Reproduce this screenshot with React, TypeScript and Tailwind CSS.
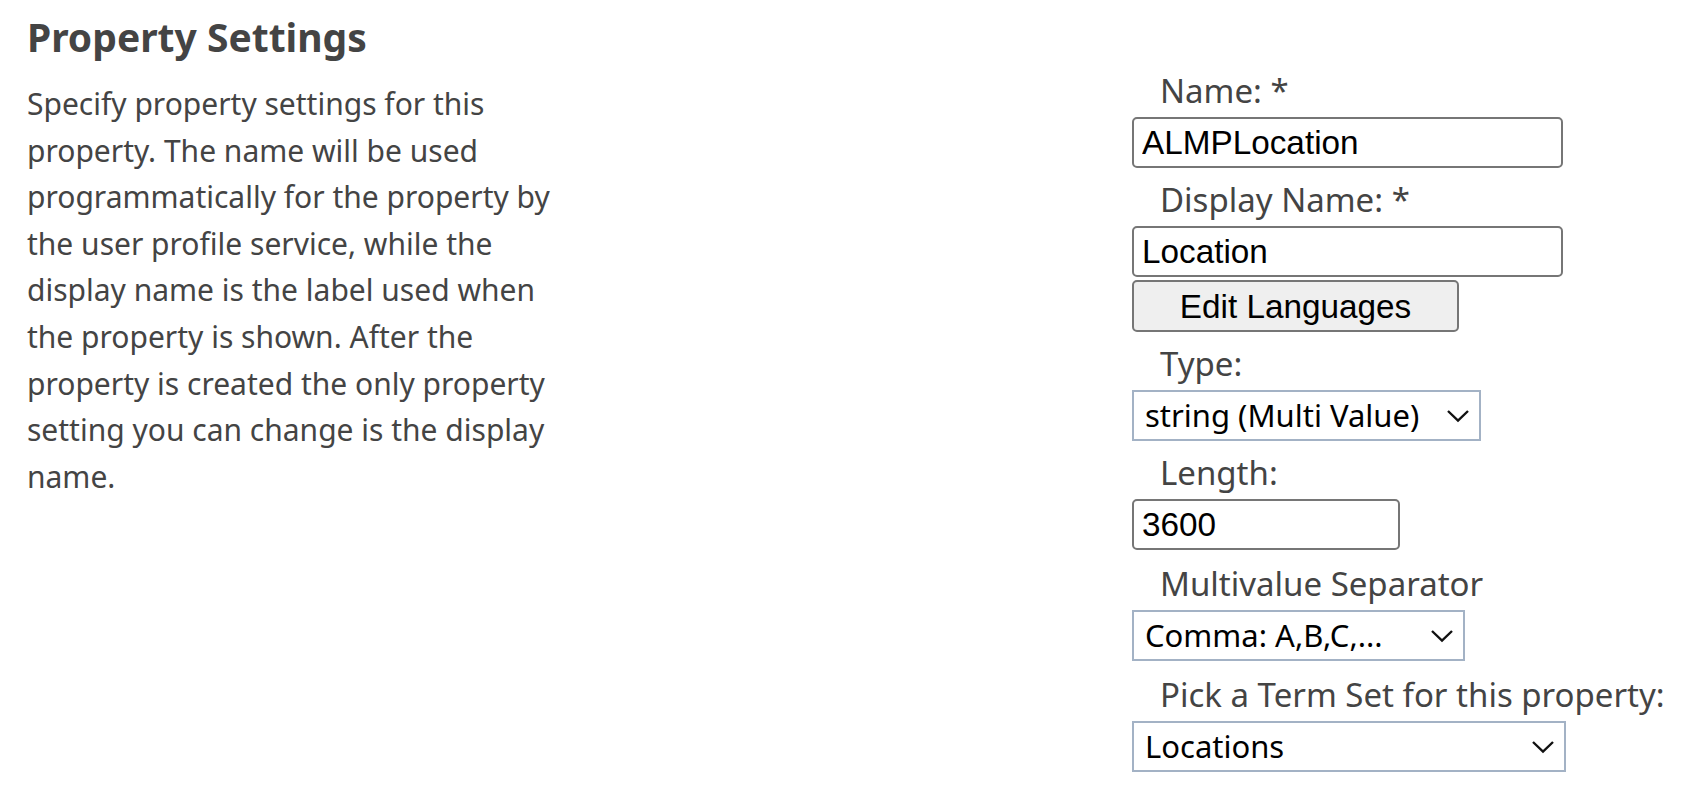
import React from 'react';

const labelClass =
  "block pl-[28px] pt-[11px] pb-[5px] text-[33px] leading-[42px] text-[#444444] [font-family:'Noto_Sans',sans-serif]";

const inputClass =
  "block h-[51px] border-2 border-[#767676] rounded-[5px] bg-white px-[8px] text-[33.3px] text-black [font-family:'Liberation_Sans',Arial,sans-serif] outline-none";

const Chevron = () => (
  <svg
    className="pointer-events-none absolute right-[11px] top-1/2 -translate-y-1/2"
    width="24"
    height="14"
    viewBox="0 0 24 14"
    fill="none"
  >
    <path d="M2 2 L12 11.5 L22 2" stroke="#111" strokeWidth="2.4" />
  </svg>
);

const Select = ({ value, width }: { value: string; width: string }) => (
  <div className={`relative ${width}`}>
    <select
      defaultValue={value}
      className="block h-[51px] w-full appearance-none border-2 border-[#a3b2c5] bg-white pl-[11px] pr-[50px] text-[31px] text-black [font-family:'Noto_Sans',sans-serif] outline-none"
    >
      <option>{value}</option>
    </select>
    <Chevron />
  </div>
);

export default function App() {
  return (
    <div className="min-h-[810px] bg-white px-[27px]">
      <div className="grid grid-cols-[1105px_auto]">
        {/* Description */}
        <div className="pt-[13px]">
          <h2 className="text-[39px] font-bold leading-[47px] text-[#444444] [font-family:'Noto_Sans',sans-serif]">
            Property Settings
          </h2>
          <p className="mt-[21px] w-[540px] text-[30px] leading-[46.6px] text-[#444444] [font-family:'Noto_Sans',sans-serif]">
            Specify property settings for this property. The name will be used
            programmatically for the property by the user profile service, while
            the display name is the label used when the property is shown. After
            the property is created the only property setting you can change is
            the display name.
          </p>
        </div>

        {/* Form */}
        <div className="pt-[59px]">
          <label className={labelClass}>Name: *</label>
          <input className={`${inputClass} w-[431px]`} defaultValue="ALMPLocation" />

          <label className={labelClass}>Display Name: *</label>
          <input className={`${inputClass} w-[431px]`} defaultValue="Location" />
          <button className="mt-[3px] block h-[52px] w-[327px] rounded-[5px] border-2 border-[#767676] bg-[#efefef] text-[33.3px] text-black [font-family:'Liberation_Sans',Arial,sans-serif]">
            Edit Languages
          </button>

          <label className={labelClass}>Type:</label>
          <Select value="string (Multi Value)" width="w-[349px]" />

          <label className={labelClass}>Length:</label>
          <input className={`${inputClass} w-[268px]`} defaultValue="3600" />

          <label className={`${labelClass} pt-[13px]`}>Multivalue Separator</label>
          <Select value="Comma: A,B,C,..." width="w-[333px]" />

          <label className={`${labelClass} pt-[13px]`}>Pick a Term Set for this property:</label>
          <Select value="Locations" width="w-[434px]" />
        </div>
      </div>
    </div>
  );
}
